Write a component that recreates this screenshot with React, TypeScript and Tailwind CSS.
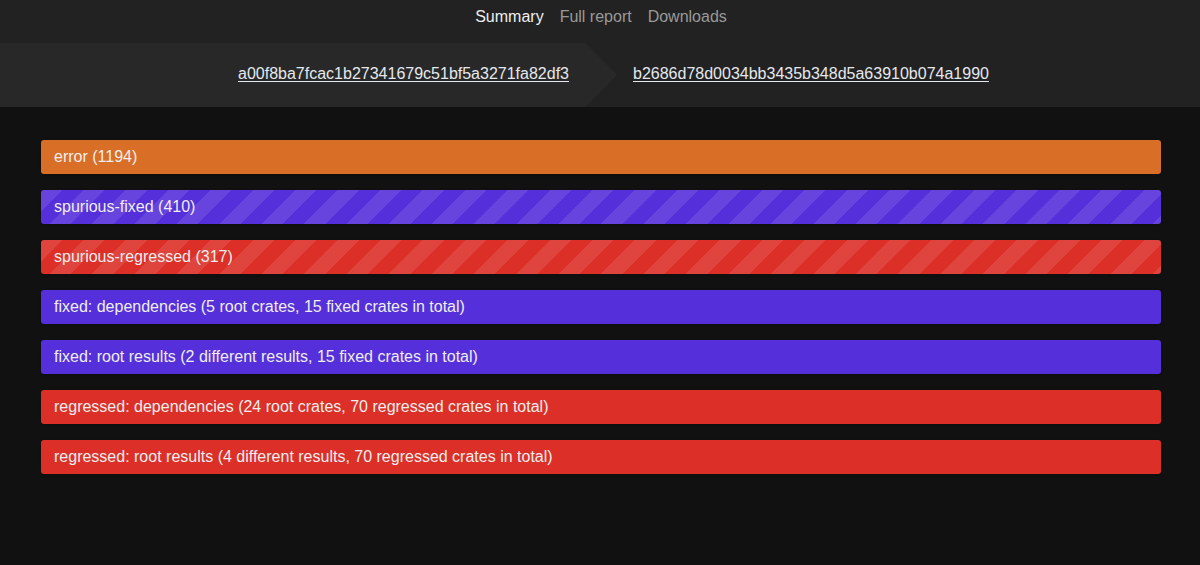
const categories = [
    { label: "error (1194)", color: "bg-[#d96e27]", striped: false },
    { label: "spurious-fixed (410)", color: "bg-[#552fd9]", striped: true },
    { label: "spurious-regressed (317)", color: "bg-[#db2f27]", striped: true },
    { label: "fixed: dependencies (5 root crates, 15 fixed crates in total)", color: "bg-[#552fd9]", striped: false },
    { label: "fixed: root results (2 different results, 15 fixed crates in total)", color: "bg-[#552fd9]", striped: false },
    { label: "regressed: dependencies (24 root crates, 70 regressed crates in total)", color: "bg-[#db2f27]", striped: false },
    { label: "regressed: root results (4 different results, 70 regressed crates in total)", color: "bg-[#db2f27]", striped: false },
];

export default function App() {
    return (
        <main className="min-h-[565px] bg-[#111111] font-['Liberation_Sans',Arial,sans-serif] text-[16px]">
            {/* Top nav */}
            <nav className="h-[43px] bg-[#222222] flex items-start justify-center gap-4 pt-[5px] pl-[2px]">
                <a className="text-[#eeeeee]">Summary</a>
                <a className="text-[#999999]">Full report</a>
                <a className="text-[#999999]">Downloads</a>
            </nav>

            {/* Compared commits */}
            <div className="h-16 bg-[#222222] flex">
                <div className="w-[585px] bg-[#282828] flex items-center justify-end pr-4 pb-[2px]">
                    <a className="underline text-[#e4e8ee] underline-offset-2">a00f8ba7fcac1b27341679c51bf5a3271fa82df3</a>
                </div>
                <svg width="32" height="64" viewBox="0 0 32 64" className="block">
                    <polygon points="0,0 32,32 0,64" fill="#282828" />
                </svg>
                <div className="flex items-center pl-4 pb-[2px]">
                    <a className="underline text-[#e4e8ee] underline-offset-2">b2686d78d0034bb3435b348d5a63910b074a1990</a>
                </div>
            </div>

            {/* Category bars */}
            <div className="pl-[41px] pr-[39px] pt-[33px] flex flex-col gap-4">
                {categories.map((cat) => (
                    <div
                        key={cat.label}
                        className={`h-[34px] rounded-[3px] flex items-center px-[13px] text-[#eeeeee] shadow-sm ${cat.color} ${
                            cat.striped
                                ? "bg-[repeating-linear-gradient(135deg,rgba(255,255,255,0.1)_0_15px,transparent_15px_30px)]"
                                : ""
                        }`}
                    >
                        <span>{cat.label}</span>
                    </div>
                ))}
            </div>
        </main>
    );
}
